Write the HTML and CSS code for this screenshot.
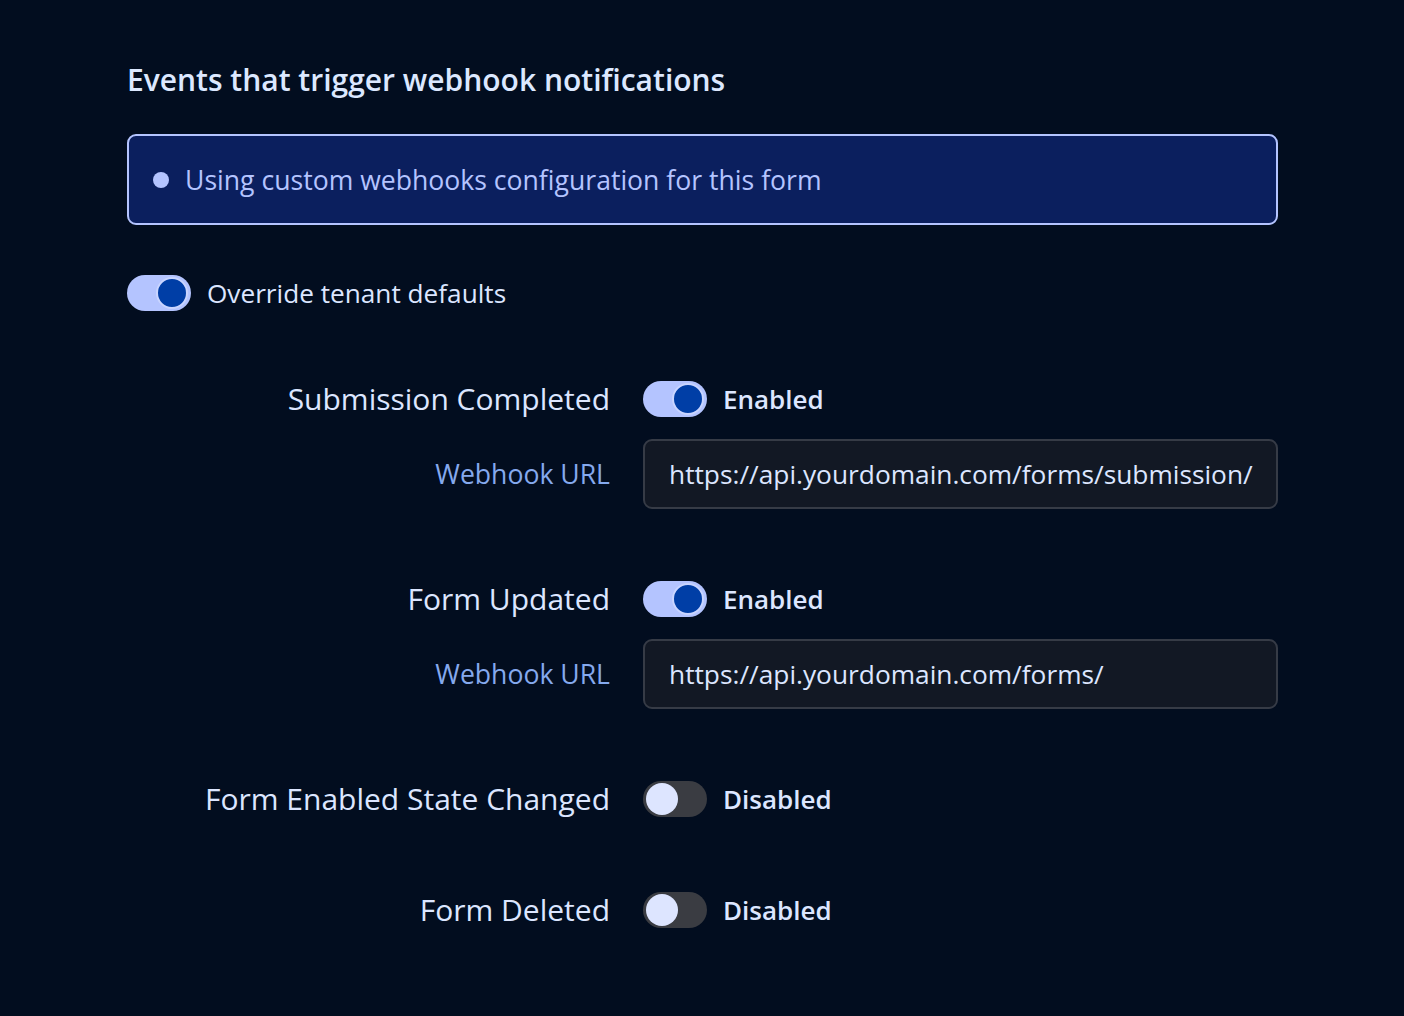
FILE: index.html
```html
<!DOCTYPE html>
<html lang="en">
<head>
<meta charset="utf-8">
<title>Webhooks</title>
<link rel="stylesheet" href="styles.css">
</head>
<body>
<main class="panel">
  <h2 class="title">Events that trigger webhook notifications</h2>
  <div class="alert"><span class="dot"></span><span>Using custom webhooks configuration for this form</span></div>
  <label class="override">
    <span class="switch on"><span class="knob"></span></span>
    <span class="override-text">Override tenant defaults</span>
  </label>
  <div class="events">
    <div class="event">
      <div class="row">
        <div class="label">Submission Completed</div>
        <div class="control"><span class="switch on"><span class="knob"></span></span><span class="state">Enabled</span></div>
      </div>
      <div class="row url-row">
        <div class="label url-label">Webhook URL</div>
        <div class="input">https://api.yourdomain.com/forms/submission/</div>
      </div>
    </div>
    <div class="event">
      <div class="row">
        <div class="label">Form Updated</div>
        <div class="control"><span class="switch on"><span class="knob"></span></span><span class="state">Enabled</span></div>
      </div>
      <div class="row url-row">
        <div class="label url-label">Webhook URL</div>
        <div class="input">https://api.yourdomain.com/forms/</div>
      </div>
    </div>
    <div class="event">
      <div class="row">
        <div class="label">Form Enabled State Changed</div>
        <div class="control"><span class="switch"><span class="knob"></span></span><span class="state">Disabled</span></div>
      </div>
    </div>
    <div class="event">
      <div class="row">
        <div class="label">Form Deleted</div>
        <div class="control"><span class="switch"><span class="knob"></span></span><span class="state">Disabled</span></div>
      </div>
    </div>
  </div>
</main>
</body>
</html>
```
FILE: styles.css
```css
html, body {
  margin: 0;
  padding: 0;
  background: #020d1f;
  height: 100%;
}
body {
  font-family: "Open Sans", "Noto Sans", sans-serif;
  color: #dce6ff;
}
.panel {
  width: 1151px;
  margin-left: 127px;
  padding-top: 58px;
}
.title {
  margin: 0;
  font-size: 30px;
  font-weight: 600;
  line-height: 44px;
  color: #dce8ff;
}
.alert {
  margin-top: 32px;
  height: 91px;
  box-sizing: border-box;
  border: 2px solid #b4c4ff;
  border-radius: 9px;
  background: #0b1f5e;
  display: flex;
  align-items: center;
  gap: 16px;
  padding-left: 24px;
  font-size: 26.6px;
  color: #b4c4ff;
}
.dot {
  width: 16px;
  height: 16px;
  border-radius: 50%;
  background: #b4c4ff;
  flex: none;
}
.override {
  margin-top: 49px;
  display: flex;
  align-items: center;
  gap: 16px;
  height: 38px;
}
.override-text {
  font-size: 26.2px;
  color: #dce6ff;
}
.switch {
  width: 64px;
  height: 36px;
  border-radius: 18px;
  background: #3a3c42;
  display: flex;
  align-items: center;
  padding: 0 3px;
  box-sizing: border-box;
  flex: none;
}
.switch .knob {
  width: 32px;
  height: 32px;
  border-radius: 50%;
  background: #dde5ff;
  box-sizing: border-box;
}
.switch.on {
  background: #b4c4ff;
  justify-content: flex-end;
}
.switch.on .knob {
  background: #003ea6;
  border: 2px solid #c9d5ff;
}
.events {
  margin-top: 66px;
}
.event {
  margin-bottom: 69px;
}
.event:nth-child(3) {
  margin-bottom: 70px;
}
.row {
  display: grid;
  grid-template-columns: 483px 635px;
  column-gap: 33px;
  align-items: center;
  min-height: 40px;
}
.url-row {
  margin-top: 20px;
}
.label {
  text-align: right;
  font-size: 30px;
  color: #dce6ff;
}
.url-label {
  font-size: 26.6px;
  color: #85a9ee;
}
.control {
  display: flex;
  align-items: center;
  gap: 16px;
}
.state {
  font-size: 26px;
  font-weight: 600;
  color: #dce6ff;
}
.input {
  height: 70px;
  box-sizing: border-box;
  border: 2px solid #363b46;
  border-radius: 9px;
  background: #121824;
  display: flex;
  align-items: center;
  padding-left: 24px;
  font-size: 26.3px;
  color: #dce6ff;
  white-space: nowrap;
  overflow: hidden;
}
```
